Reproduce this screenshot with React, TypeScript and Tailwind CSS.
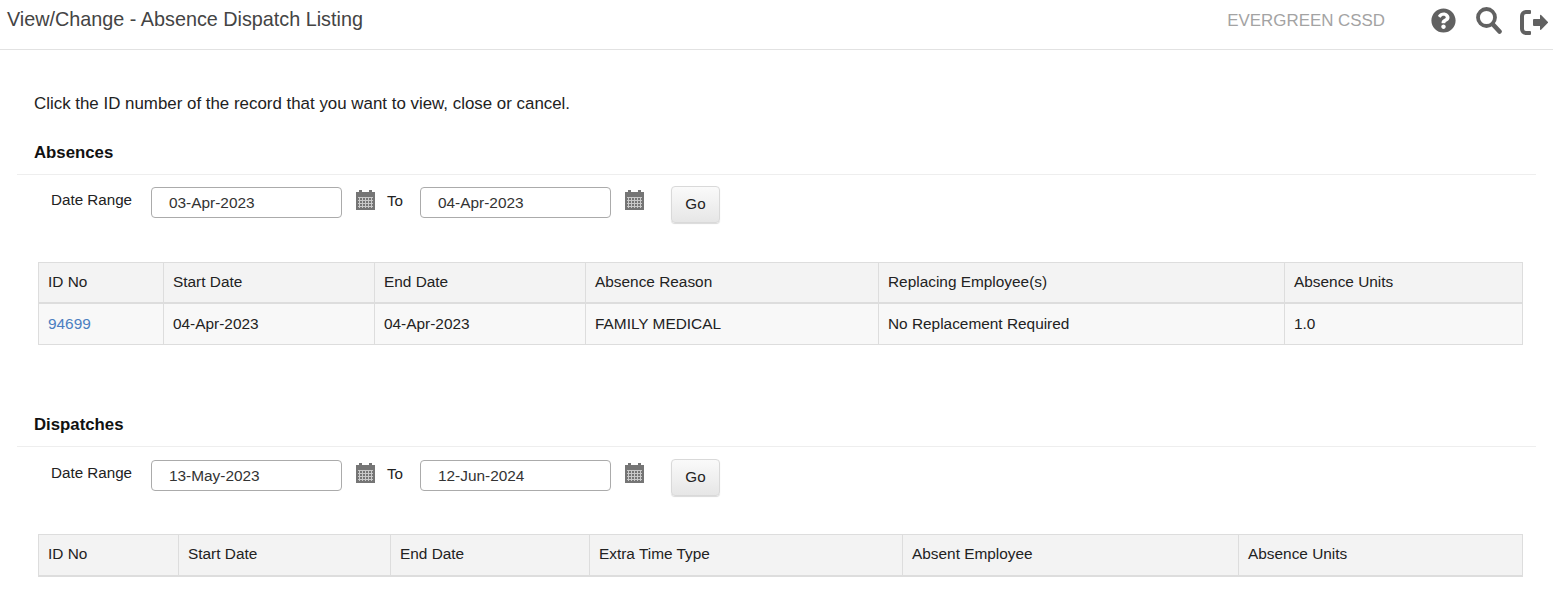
import { FaQuestionCircle } from 'react-icons/fa'

function CalendarIcon() {
  return (
    <svg width="19" height="20" viewBox="0 0 19 20" className="shrink-0 text-[#757575]" fill="currentColor">
      <rect x="3" y="0" width="3" height="4" />
      <rect x="13" y="0" width="3" height="4" />
      <rect x="0" y="2" width="19" height="18" />
      <path
        d="M2 7.500h15M2 10.500h15M2 13.500h15M2 16.500h15M3.500 7v11M6.500 7v11M9.500 7v11M12.500 7v11M15.500 7v11"
        stroke="#c9c9c9"
        strokeWidth="1"
        fill="none"
      />
    </svg>
  )
}

function SearchIcon() {
  return (
    <svg width="26" height="27" viewBox="0 0 26 27" className="shrink-0" fill="none" stroke="currentColor">
      <circle cx="10.500" cy="10.500" r="8.500" strokeWidth="3.800" />
      <path d="M17 17.500l6.500 7" strokeWidth="4.600" strokeLinecap="round" />
    </svg>
  )
}

function SignOutIcon() {
  return (
    <svg width="28" height="25" viewBox="0 0 28 25" className="shrink-0" fill="currentColor">
      <path d="M10 0H6a6 6 0 0 0-6 6v13a6 6 0 0 0 6 6h4a1 1 0 0 0 1-1v-2a1 1 0 0 0-1-1H6a2 2 0 0 1-2-2V6a2 2 0 0 1 2-2h4a1 1 0 0 0 1-1V1a1 1 0 0 0-1-1z" />
      <path d="M20 5.500c0-.6.700-.9 1.100-.5l6.600 6.700a1 1 0 0 1 0 1.400l-6.600 6.700c-.4.400-1.100.1-1.100-.5V16h-6a1 1 0 0 1-1-1V10a1 1 0 0 1 1-1h6z" />
    </svg>
  )
}

function DateInput({ value }: { value: string }) {
  return (
    <div className="w-[191px] h-[31px] shrink-0 rounded-[4px] border border-[#ababab] bg-white pl-[17px] text-[15.4px] leading-[30px] text-[#333]">
      {value}
    </div>
  )
}

function DateFilter({ from, to }: { from: string; to: string }) {
  return (
    <div className="flex items-start pl-[51px]">
      <span className="w-[100px] pt-[1px] text-[15.2px] leading-[24px] text-[#222]">Date Range</span>
      <DateInput value={from} />
      <div className="ml-[14px] mt-[3px]">
        <CalendarIcon />
      </div>
      <span className="w-[45px] pl-[12px] pt-[2px] text-[15.2px] leading-[24px] text-[#222]">To</span>
      <DateInput value={to} />
      <div className="ml-[14px] mt-[3px]">
        <CalendarIcon />
      </div>
      <button className="ml-[27px] -mt-[1px] h-[37px] w-[49px] rounded-[4px] border border-[#d9d9d9] bg-gradient-to-b from-[#fafafa] to-[#e6e6e6] text-[15.2px] text-[#222] shadow-[0_1px_1px_rgba(0,0,0,0.15)]">
        Go
      </button>
    </div>
  )
}

function DataTable({
  widths,
  headers,
  rows,
  headHeight,
}: {
  widths: number[]
  headers: string[]
  rows: string[][]
  headHeight: string
}) {
  return (
    <table className="ml-[38px] w-[1485px] table-fixed border-separate border-spacing-0 border-t border-l border-[#dddddd] text-[15.4px] text-[#222]">
      <colgroup>
        {widths.map((w, i) => (
          <col key={i} style={{ width: w }} />
        ))}
      </colgroup>
      <thead>
        <tr className={`${headHeight} bg-[#f3f3f3]`}>
          {headers.map((h) => (
            <th key={h} className="border-r border-b-2 border-[#dddddd] pb-[2px] pl-[9px] text-left font-normal">
              {h}
            </th>
          ))}
        </tr>
      </thead>
      <tbody>
        {rows.map((row) => (
          <tr key={row[0]} className="h-[41px] bg-[#f8f8f8]">
            {row.map((cell, i) => (
              <td key={i} className="border-r border-b border-[#dddddd] pb-[1px] pl-[9px]">
                {i === 0 ? <a className="text-[#4b7fc1]">{cell}</a> : cell}
              </td>
            ))}
          </tr>
        ))}
      </tbody>
    </table>
  )
}

export default function App() {
  return (
    <div className="h-[605px] overflow-hidden bg-white font-['Liberation_Sans',Arial,sans-serif]">
      <header className="flex h-[50px] items-start border-b border-[#e2e2e2] pl-[7px] pr-[5px]">
        <h1 className="flex-1 pt-[7px] text-[19.800px] leading-[24px] text-[#444]">View/Change - Absence Dispatch Listing</h1>
        <span className="pt-[9px] text-[16.900px] leading-[24px] text-[#a3a3a3]">EVERGREEN CSSD</span>
        <div className="ml-[46px] flex items-start pt-[7px] text-[#616161]">
          <FaQuestionCircle size={25} className="mt-[1px]" />
          <div className="ml-[20px]">
            <SearchIcon />
          </div>
          <div className="ml-[18px] mt-[3px]">
            <SignOutIcon />
          </div>
        </div>
      </header>

      <p className="pl-[34px] pt-[44px] text-[16.900px] leading-[20px] text-[#222]">
        Click the ID number of the record that you want to view, close or cancel.
      </p>

      <section className="pt-[29px]">
        <h2 className="pl-[34px] text-[16.800px] font-bold leading-[20px] text-[#111]">Absences</h2>
        <div className="mx-[17px] mt-[11px] border-b border-[#eeeeee]" />
        <div className="pt-[12px]">
          <DateFilter from="03-Apr-2023" to="04-Apr-2023" />
        </div>
        <div className="pt-[39px]">
          <DataTable
            headHeight="h-[41px]"
            widths={[125, 211, 211, 293, 406, 238]}
            headers={['ID No', 'Start Date', 'End Date', 'Absence Reason', 'Replacing Employee(s)', 'Absence Units']}
            rows={[['94699', '04-Apr-2023', '04-Apr-2023', 'FAMILY MEDICAL', 'No Replacement Required', '1.0']]}
          />
        </div>
      </section>

      <section className="pt-[70px]">
        <h2 className="pl-[34px] text-[16.800px] font-bold leading-[20px] text-[#111]">Dispatches</h2>
        <div className="mx-[17px] mt-[11px] border-b border-[#eeeeee]" />
        <div className="pt-[13px]">
          <DateFilter from="13-May-2023" to="12-Jun-2024" />
        </div>
        <div className="pt-[38px]">
          <DataTable
            headHeight="h-[42px]"
            widths={[140, 212, 199, 313, 336, 284]}
            headers={['ID No', 'Start Date', 'End Date', 'Extra Time Type', 'Absent Employee', 'Absence Units']}
            rows={[]}
          />
        </div>
      </section>
    </div>
  )
}
